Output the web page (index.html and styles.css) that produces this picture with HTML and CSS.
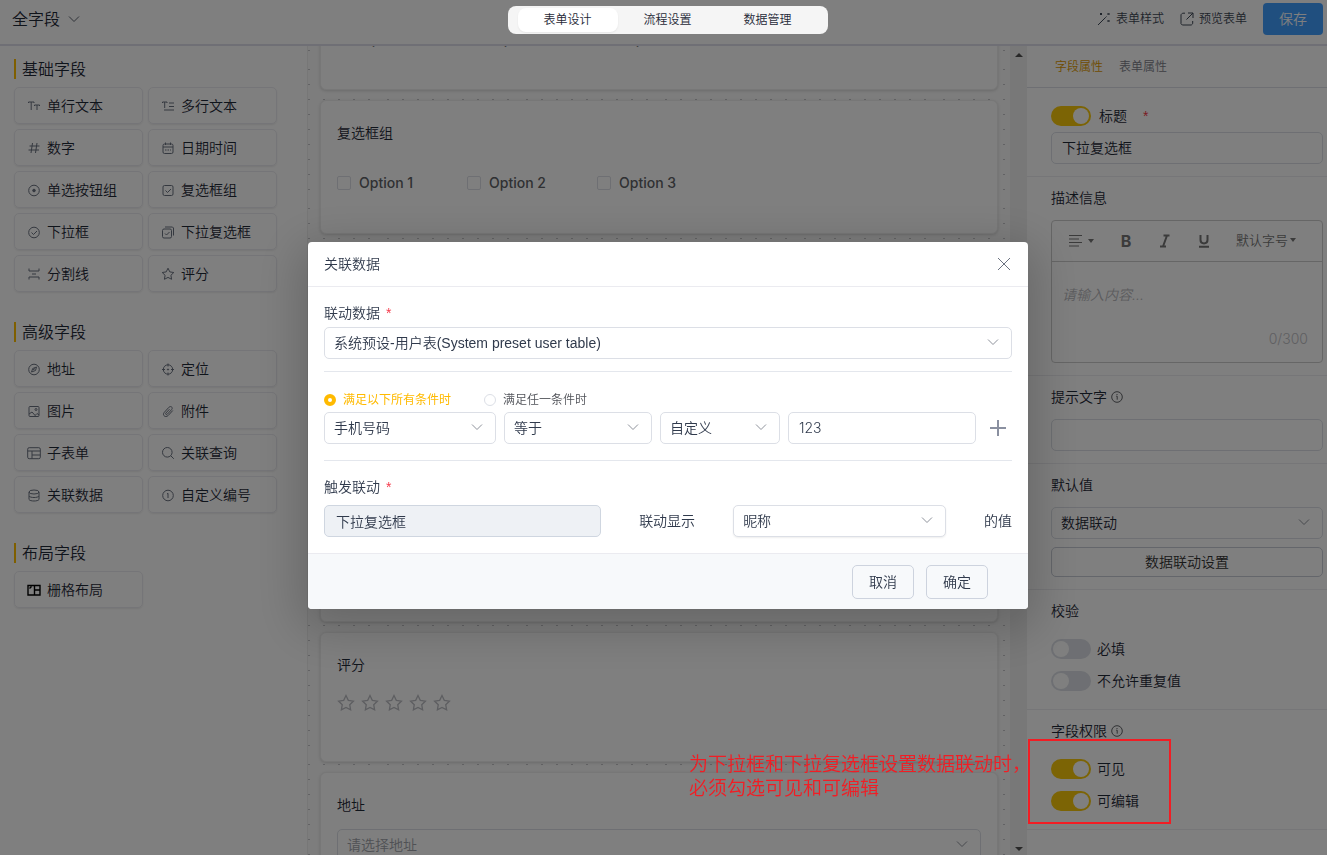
FILE: index.html
```html
<!DOCTYPE html>
<html lang="zh-CN">
<head>
<meta charset="utf-8">
<meta name="viewport" content="width=device-width, initial-scale=1">
<title>全字段</title>
<link rel="stylesheet" href="styles.css">
</head>
<body>
<svg class="sprite" aria-hidden="true">
  <symbol id="chevron" viewBox="0 0 12 12"><path d="M1 3.5l5 5 5-5"/></symbol>
  <symbol id="star" viewBox="0 0 14 14"><path d="M7 1.2l1.8 3.7 4 .6-2.9 2.8.7 4L7 10.4l-3.6 1.9.7-4L1.200 5.500l4-.6z"/></symbol>
  <symbol id="info" viewBox="0 0 12 12"><circle cx="6" cy="6" r="5.300"/><path d="M5.200 5.200h1v3.500M6 3v1"/></symbol>
</svg>
<div class="app">
  <header class="topbar">
    <button class="form-name" type="button">全字段 <svg class="icon-12"><use href="#chevron"/></svg></button>
    <nav class="stage-tabs">
      <button class="stage-tab is-active" type="button">表单设计</button>
      <button class="stage-tab" type="button">流程设置</button>
      <button class="stage-tab" type="button">数据管理</button>
    </nav>
    <div class="top-actions">
      <button class="link-button" type="button"><svg class="icon-14" viewBox="0 0 14 14"><path d="M1 13l7.500-7.500M3 1l2 2M5 1L3 3M10.500 1l2 2M12.500 1l-2 2M10.500 8l2 2M12.500 8l-2 2M8.500 5.500l1-1"/></svg>表单样式</button>
      <button class="link-button" type="button"><svg class="icon-14" viewBox="0 0 14 14"><path d="M5 1.200H2.500L1 2.700v9l1.300 1.300h9l1.400-1.300V9M8 1h5v5M13 1L6.500 7.500"/></svg>预览表单</button>
      <button class="save" type="button">保存</button>
    </div>
  </header>
  <div class="workspace">
    <aside class="palette">
      <section class="group">
        <h2>基础字段</h2>
        <div class="fields">
          <button type="button"><svg viewBox="0 0 14 14"><path d="M1.500 4V3H7v1M4.200 3v8M7.500 7V6h5v1M10 6v5"/></svg>单行文本</button>
          <button type="button"><svg viewBox="0 0 14 14"><path d="M1.500 4V3H6v1M3.700 3v6M8 4h5M8 7.500h5M3 11h10"/></svg>多行文本</button>
          <button type="button"><svg viewBox="0 0 14 14"><path d="M5.500 2l-1.500 10M10 2L8.500 12M2.500 5H12.500M1.500 9h10.500"/></svg>数字</button>
          <button type="button"><svg viewBox="0 0 14 14"><rect x="2" y="3" width="10" height="9.500" rx="1.500"/><path d="M2 6h10M4.500 1.500V4M9.500 1.500V4M4 9h1.500M6.500 9H8M9 9h1"/></svg>日期时间</button>
          <button type="button"><svg viewBox="0 0 14 14"><circle cx="7" cy="7.500" r="5.300"/><circle class="solid" cx="7" cy="7.500" r="1.300"/></svg>单选按钮组</button>
          <button type="button"><svg viewBox="0 0 14 14"><rect x="2" y="2.500" width="10" height="10" rx="1.500"/><path d="M4.500 7.500l2 2 3.500-3.500"/></svg>复选框组</button>
          <button type="button"><svg viewBox="0 0 14 14"><circle cx="7" cy="7.500" r="5.300"/><path d="M4.500 7.500l2 2L10 6"/></svg>下拉框</button>
          <button type="button"><svg viewBox="0 0 14 14"><rect x="1.500" y="4" width="9" height="9" rx="1.500"/><path d="M4 2h7.500l1 1v7.500M4 8.500l1.500 1.500L8.500 7"/></svg>下拉复选框</button>
          <button type="button"><svg viewBox="0 0 14 14"><path d="M2 1.500V4h10V1.500M2 12.500V10h10v2.500M5 7h4"/></svg>分割线</button>
          <button type="button"><svg viewBox="0 0 14 14"><use href="#star"/></svg>评分</button>
        </div>
      </section>
      <section class="group">
        <h2>高级字段</h2>
        <div class="fields">
          <button type="button"><svg viewBox="0 0 14 14"><circle cx="7" cy="7.500" r="5.300"/><path d="M9.500 5L8.500 8.500l-4 1.500L5.700 6.500zM6 8l2-1.500"/></svg>地址</button>
          <button type="button"><svg viewBox="0 0 14 14"><circle cx="7" cy="7.500" r="4.700"/><path d="M7 1.500v3M7 10.500v3M1 7.500h3M10 7.500h3"/><circle class="solid" cx="7" cy="7.500" r=".6"/></svg>定位</button>
          <button type="button"><svg viewBox="0 0 14 14"><rect x="2" y="2.500" width="10" height="10" rx="1"/><circle cx="9" cy="5.500" r="1"/><path d="M2 10l3-2 4 4.500M8.500 11l1.500-1.500 2 1.500"/></svg>图片</button>
          <button type="button"><svg viewBox="0 0 14 14"><path d="M11.800 6.500l-4.600 5c-2.900 2.700-6.300-.4-3.900-3.200l4.600-5c2-1.900 4.500.3 2.700 2.300l-4.300 4.600c-1 1-2.300-.1-1.400-1.200L8.500 5.200"/></svg>附件</button>
          <button type="button"><svg viewBox="0 0 14 14"><rect x=".7" y="1.700" width="12.600" height="11" rx="1.500"/><path d="M.7 5h12.600M5 5v7.700M5 9h8.300"/></svg>子表单</button>
          <button type="button"><svg viewBox="0 0 14 14"><circle cx="6.300" cy="6.300" r="4.800"/><path d="M9.800 9.800l3 3"/></svg>关联查询</button>
          <button type="button"><svg viewBox="0 0 14 14"><ellipse cx="7" cy="4" rx="5" ry="2"/><path d="M2 4v7.500c1 2 9 2 10 0V4M2 8c1 2 9 2 10 0"/></svg>关联数据</button>
          <button type="button"><svg viewBox="0 0 14 14"><circle cx="7" cy="7.500" r="5.300"/><path d="M6 6l1-.7v4.700"/></svg>自定义编号</button>
        </div>
      </section>
      <section class="group">
        <h2>布局字段</h2>
        <div class="fields">
          <button type="button"><svg class="dark" viewBox="0 0 14 14"><path d="M1 2.500h12v9.500H1zM7.500 2.500V12M7.500 7H13M2.500 5.500l2-2"/></svg>栅格布局</button>
        </div>
      </section>
    </aside>

    <main class="canvas">
      <div class="sheet">
        <section class="form-card form-card-plain">
          <div class="options options-wide">
            <label><input type="radio" name="single">Option 1</label>
            <label><input type="radio" name="single">Option 2</label>
            <label><input type="radio" name="single">Option 3</label>
          </div>
        </section>
        <section class="form-card">
          <h3>复选框组</h3>
          <div class="options">
            <label><input type="checkbox">Option 1</label>
            <label><input type="checkbox">Option 2</label>
            <label><input type="checkbox">Option 3</label>
          </div>
        </section>
        <section class="form-card form-card-tall"></section>
        <section class="form-card form-card-tall"></section>
        <section class="form-card form-card-rate">
          <h3>评分</h3>
          <div class="stars">
            <svg viewBox="0 0 14 14"><use href="#star"/></svg><svg viewBox="0 0 14 14"><use href="#star"/></svg><svg viewBox="0 0 14 14"><use href="#star"/></svg><svg viewBox="0 0 14 14"><use href="#star"/></svg><svg viewBox="0 0 14 14"><use href="#star"/></svg>
          </div>
        </section>
        <section class="form-card">
          <h3><label for="address">地址</label></h3>
          <div class="picker picker-muted"><select id="address"><option>请选择地址</option></select><svg class="icon-12"><use href="#chevron"/></svg></div>
        </section>
      </div>
      <div class="scrollbar"><span class="arrow-up"></span><span class="arrow-down"></span></div>
    </main>

    <aside class="props">
      <nav class="prop-tabs">
        <button class="is-active" type="button">字段属性</button>
        <button type="button">表单属性</button>
      </nav>
      <section class="prop prop-title">
        <label class="switch-row switch-row-title"><input class="switch" type="checkbox" checked><span>标题</span><i class="star-mark">*</i></label>
        <input class="text" type="text" value="下拉复选框" aria-label="标题">
      </section>
      <section class="prop">
        <label class="prop-label" for="desc">描述信息</label>
        <div class="editor">
          <div class="editor-bar">
            <button type="button" aria-label="对齐"><svg class="icon-14" viewBox="0 0 14 14"><path d="M0 1.500h13M0 5h10M0 8.500h13M0 12h10"/></svg><span class="caret"></span></button>
            <button class="bold" type="button">B</button>
            <button type="button" aria-label="斜体"><svg class="icon-14 heavy" viewBox="0 0 14 14"><path d="M5.500 1.500h6M2 12.500h6M9 1.500L5 12.500"/></svg></button>
            <button type="button" aria-label="下划线"><svg class="icon-14 heavy" viewBox="0 0 14 14"><path d="M3.500 1v5c0 4.500 7 4.500 7 0V1M2 12.800h10"/></svg></button>
            <button class="size" type="button">默认字号<span class="caret"></span></button>
          </div>
          <textarea id="desc" placeholder="请输入内容..."></textarea>
          <div class="count">0/300</div>
        </div>
      </section>
      <section class="prop">
        <label class="prop-label" for="hint">提示文字 <svg class="icon-12"><use href="#info"/></svg></label>
        <input class="text" id="hint" type="text">
      </section>
      <section class="prop">
        <label class="prop-label" for="default">默认值</label>
        <div class="picker"><select id="default"><option>数据联动</option></select><svg class="icon-12"><use href="#chevron"/></svg></div>
        <button class="wide-button" type="button">数据联动设置</button>
      </section>
      <section class="prop">
        <h3 class="prop-label">校验</h3>
        <label class="switch-row"><input class="switch" type="checkbox"><span>必填</span></label>
        <label class="switch-row"><input class="switch" type="checkbox"><span>不允许重复值</span></label>
      </section>
      <section class="prop prop-access">
        <h3 class="prop-label">字段权限 <svg class="icon-12"><use href="#info"/></svg></h3>
        <label class="switch-row"><input class="switch" type="checkbox" checked><span>可见</span></label>
        <label class="switch-row"><input class="switch" type="checkbox" checked><span>可编辑</span></label>
        <div class="note-frame"></div>
      </section>
    </aside>
  </div>
</div>

<div class="mask">
  <div class="modal" role="dialog" aria-labelledby="modal-title">
    <header class="modal-head">
      <h2 id="modal-title">关联数据</h2>
      <button class="close" type="button" aria-label="关闭"><svg class="icon-14" viewBox="0 0 14 14"><path d="M1 1l12 12M13 1L1 13"/></svg></button>
    </header>
    <div class="modal-body">
      <section class="block">
        <label class="block-label" for="source">联动数据 <i class="star-mark">*</i></label>
        <div class="picker picker-source"><select id="source"><option>系统预设-用户表(System preset user table)</option></select><svg class="icon-12"><use href="#chevron"/></svg></div>
      </section>
      <section class="block block-rules">
        <div class="modes">
          <label class="mode"><input type="radio" name="mode" checked><span>满足以下所有条件时</span></label>
          <label class="mode"><input type="radio" name="mode"><span>满足任一条件时</span></label>
        </div>
        <div class="rule">
          <div class="picker"><select aria-label="字段"><option>手机号码</option></select><svg class="icon-12"><use href="#chevron"/></svg></div>
          <div class="picker"><select aria-label="条件"><option>等于</option></select><svg class="icon-12"><use href="#chevron"/></svg></div>
          <div class="picker"><select aria-label="类型"><option>自定义</option></select><svg class="icon-12"><use href="#chevron"/></svg></div>
          <input class="text" type="text" value="123" aria-label="值">
          <button class="add" type="button" aria-label="添加"><svg viewBox="0 0 16 16"><path d="M8 0v16M0 8h16"/></svg></button>
        </div>
      </section>
      <section class="block block-trigger">
        <label class="block-label" for="target">触发联动 <i class="star-mark">*</i></label>
        <div class="trigger">
          <input class="text" id="target" type="text" value="下拉复选框" disabled>
          <label for="shown">联动显示</label>
          <div class="picker picker-raised"><select id="shown"><option>昵称</option></select><svg class="icon-12"><use href="#chevron"/></svg></div>
          <span>的值</span>
        </div>
      </section>
    </div>
    <footer class="modal-foot">
      <button type="button">取消</button>
      <button type="button">确定</button>
    </footer>
  </div>
</div>
<p class="note">为下拉框和下拉复选框设置数据联动时，<br>必须勾选可见和可编辑</p>
</body>
</html>
```

FILE: styles.css
```css
* { box-sizing: border-box; }

body {
  margin: 0;
  font: 14px/22px Inter, "Noto Sans CJK SC", sans-serif;
  font-weight: 350;
  color: #1f2937;
  background: #fff;
  overflow: hidden;
}

h2, h3, p { margin: 0; font-weight: inherit; font-size: inherit; }
i { font-style: normal; }
button, input, select, textarea {
  font: inherit;
  color: inherit;
  margin: 0;
}
button { border: 0; padding: 0; background: none; cursor: pointer; }

svg { fill: none; stroke: currentColor; stroke-width: 1; flex: none; display: block; }
.sprite { position: absolute; width: 0; height: 0; }
.icon-12 { width: 12px; height: 12px; }
.icon-14 { width: 14px; height: 14px; }
.solid { fill: currentColor; }
.heavy { stroke-width: 2; }
.star-mark { color: #f5394a; font-family: "Liberation Sans", sans-serif; }

.app { display: flex; flex-direction: column; height: 100vh; }

/* top bar */
.topbar {
  display: grid;
  grid-template-columns: 1fr auto 1fr;
  align-items: center;
  height: 46px;
  padding: 0 4px 6px 12px;
  border-bottom: 2px solid #dedeea;
}
.form-name { display: flex; align-items: center; gap: 8px; font-size: 16px; justify-self: start; }
.form-name svg { color: #5f6672; }
.stage-tabs {
  position: relative;
  z-index: 20;
  display: flex;
  margin-top: 2px;
  padding: 2px 10px;
  border-radius: 8px;
  background: #f5f5f5;
}
.stage-tab { width: 100px; height: 24px; border-radius: 8px; font-size: 12px; }
.stage-tab.is-active { background: #fff; box-shadow: 0 1px 2px #00000010; }
.top-actions { display: flex; align-items: center; justify-content: flex-end; gap: 16px; }
.link-button { display: flex; align-items: center; gap: 5px; font-size: 12px; color: #3f4856; }
.save { width: 60px; height: 32px; border-radius: 4px; background: #409eff; color: #fff; }

.workspace { flex: 1; min-height: 0; display: grid; grid-template-columns: 307px 1fr 300px; }

/* field palette */
.palette { padding: 13px 30px 0 14px; display: flex; flex-direction: column; gap: 30px; }
.group h2 { height: 20px; margin-bottom: 8px; padding-left: 6px; border-left: 2px solid #ffbf00; font-size: 16px; line-height: 20px; }
.fields { display: grid; grid-template-columns: 1fr 1fr; gap: 5px; }
.fields button {
  display: flex;
  align-items: center;
  gap: 6px;
  height: 37px;
  padding-left: 12px;
  border: 1px solid #ebebf0;
  border-radius: 5px;
  box-shadow: 0 1px 2px #00000014;
  white-space: nowrap;
}
.fields svg { width: 14px; height: 14px; color: #6b7280; }
.fields svg.dark { color: #000; stroke-width: 1.4; }

/* form canvas */
.canvas {
  display: flex;
  min-width: 0;
  min-height: 0;
  overflow: hidden;
  border-left: 1px solid #eee;
  background: #fafafa url("data:image/svg+xml,%3Csvg xmlns='http://www.w3.org/2000/svg' width='139' height='139'%3E%3Cdefs%3E%3Cpattern id='d' width='15' height='15' patternUnits='userSpaceOnUse'%3E%3Crect width='2' height='1' fill='%23c4c4c8'/%3E%3C/pattern%3E%3C/defs%3E%3Crect width='135' height='135' fill='url(%23d)'/%3E%3C/svg%3E") 79px 23px;
}
.sheet { flex: 1; display: flex; flex-direction: column; gap: 10px; margin-top: -90px; padding: 0 12px 0 12px; }
.form-card {
  flex: none;
  height: 134px;
  padding: 21px 16px;
  border: 1px solid #eee;
  border-radius: 6px;
  background: #fff;
  box-shadow: 0 1px 3px #00000026;
}
.form-card-plain { padding-top: 44px; }
.form-card-tall { height: 184px; }
.form-card-rate { height: 130px; }
.form-card h3 { height: 23px; }
.options { display: flex; gap: 12px; margin-top: 22px; }
.options label { display: flex; align-items: center; gap: 8px; width: 118px; height: 32px; font-weight: 500; color: #606266; }
.options input { appearance: none; width: 14px; height: 14px; border: 1px solid #dcdfe6; border-radius: 2px; }
.options-wide { gap: 14px; padding-left: 2px; }
.options-wide input { border-radius: 50%; }
.stars { display: flex; gap: 6px; margin-top: 14px; }
.stars svg { width: 18px; height: 24px; color: #bbbcc2; }
.form-card .picker { margin-top: 12px; }
.scrollbar { width: 17px; display: flex; flex-direction: column; justify-content: space-between; align-items: center; padding: 7px 0 4px; background: #f0f0f0; }
.arrow-up, .arrow-down { border: 4px solid transparent; }
.arrow-up { border-top: 0; border-bottom-color: #505050; }
.arrow-down { border-bottom: 0; border-top-color: #505050; }

/* shared controls */
.picker { position: relative; }
.picker select, .text {
  display: block;
  width: 100%;
  height: 32px;
  padding: 0 10px 2px;
  border: 1px solid #dcdfe6;
  border-radius: 5px;
  background: #fff;
  appearance: none;
  outline: none;
}
.picker select { padding: 0 30px 0 9px; }
.picker svg { position: absolute; right: 13px; top: 9px; color: #8e929b; pointer-events: none; }
.picker-muted select { color: #a0a3aa; }
.picker-raised select { box-shadow: 0 1px 2px #00000012; }
.picker-source select { font-family: "Liberation Sans", "Noto Sans CJK SC", sans-serif; }

/* property panel */
.props { min-width: 0; background: #fff; }
.prop-tabs { display: flex; gap: 16px; height: 42px; padding-left: 28px; border-bottom: 1px solid #dcdfe6; font-size: 12px; }
.prop-tabs button { color: #7c8089; }
.prop-tabs .is-active { color: #e09a00; }
.prop { padding: 0 4px 12px 24px; border-bottom: 1px solid #ececf0; }
.prop-title { padding-top: 12px; }
.prop-label { display: flex; align-items: center; gap: 4px; height: 43px; padding-bottom: 2px; }
.prop-label svg { color: #606266; }
.switch-row { display: flex; align-items: center; gap: 6px; height: 32px; }
.switch-row-title { gap: 8px; }
.switch-row .star-mark { margin-left: 8px; }
.switch { appearance: none; display: flex; width: 40px; height: 20px; padding: 2px; border-radius: 10px; background: #dcdfe6; }
.switch::before { content: ""; width: 16px; height: 16px; border-radius: 50%; background: #fff; }
.switch:checked { justify-content: flex-end; background: #f8c80a; }
.wide-button { display: block; width: 100%; height: 30px; margin-top: 8px; border: 1px solid #c8ccd6; border-radius: 5px; color: #333; }
.editor { height: 143px; display: flex; flex-direction: column; border: 1px solid #ccc; border-radius: 4px; }
.editor-bar { display: flex; align-items: center; justify-content: space-between; height: 41px; padding: 0 26px 0 17px; border-bottom: 1px solid #ccc; color: #777; }
.editor-bar button { display: flex; align-items: center; justify-content: center; gap: 5px; }
.editor-bar .bold { width: 14px; font-size: 16px; font-weight: 700; }
.editor-bar .size { gap: 2px; padding-bottom: 2px; font-size: 13px; }
.caret { border: 3px solid transparent; border-top: 4px solid #777; border-bottom: 0; }
.editor textarea { flex: 1; min-height: 0; padding: 22px 10px 0; border: 0; outline: none; resize: none; background: none; }
.editor textarea::placeholder { color: #b8b8bc; font-style: italic; opacity: 1; }
.count { padding: 0 14px 12px; text-align: right; color: #c0c0c4; }

/* marked area around the permission switches */
.prop-access { position: relative; }
.note-frame { position: absolute; z-index: 20; left: 1px; top: 29px; width: 143px; height: 85px; border: 2px solid #f21d24; pointer-events: none; }
.note { position: fixed; z-index: 20; right: 296px; bottom: 54px; font-size: 19px; line-height: 24px; color: #f21d24; white-space: nowrap; }

/* dialog */
.mask {
  position: fixed;
  inset: 0;
  z-index: 10;
  display: flex;
  align-items: center;
  justify-content: center;
  padding: 0 0 4px 9px;
  background: #00000080;
}
.modal { width: 720px; max-width: 100%; border-radius: 4px; background: #fff; box-shadow: 0 12px 48px 8px #00000033; overflow: hidden; color: #303a4c; }
.modal-head { display: flex; align-items: center; justify-content: space-between; height: 45px; padding: 0 17px 0 16px; border-bottom: 1px solid #ebebf0; }
.close { color: #6b7280; }
.modal-body { padding: 0 16px; }
.block { padding: 15px 0 12px; border-bottom: 1px solid #e4e7ed; }
.block-label { display: flex; align-items: center; gap: 6px; height: 22px; margin-bottom: 3px; }
.block-rules { padding: 17px 0 16px; }
.modes { display: flex; gap: 33px; height: 22px; margin-bottom: 1px; font-size: 12px; }
.mode { display: flex; align-items: center; gap: 7px; color: #505258; }
.mode input { appearance: none; width: 12px; height: 12px; border: 1px solid #dcdfe6; border-radius: 50%; }
.mode input:checked { border: 4px solid #ffba00; }
.mode input:checked + span { color: #ffba00; font-weight: 400; }
.rule { display: grid; grid-template-columns: 172fr 148fr 120fr 188fr 28px; gap: 8px; }
.add { display: flex; align-items: center; justify-content: center; color: #8a90a0; }
.add svg { width: 16px; height: 16px; stroke-width: 2; }
.block-trigger { border: 0; padding-bottom: 16px; }
.block-trigger .block-label { margin-bottom: 7px; }
.trigger { display: grid; grid-template-columns: 276fr auto 212fr auto; align-items: center; gap: 38px; }
.trigger .text { padding: 0 11px; border-color: #cfd6e0; background: #eef1f5; }
.modal-foot { display: flex; justify-content: flex-end; gap: 12px; padding: 11px 40px 10px; border-top: 1px solid #ebebf0; background: #f7f9fb; }
.modal-foot button { width: 62px; height: 34px; border: 1px solid #cdd3de; border-radius: 5px; }
```
